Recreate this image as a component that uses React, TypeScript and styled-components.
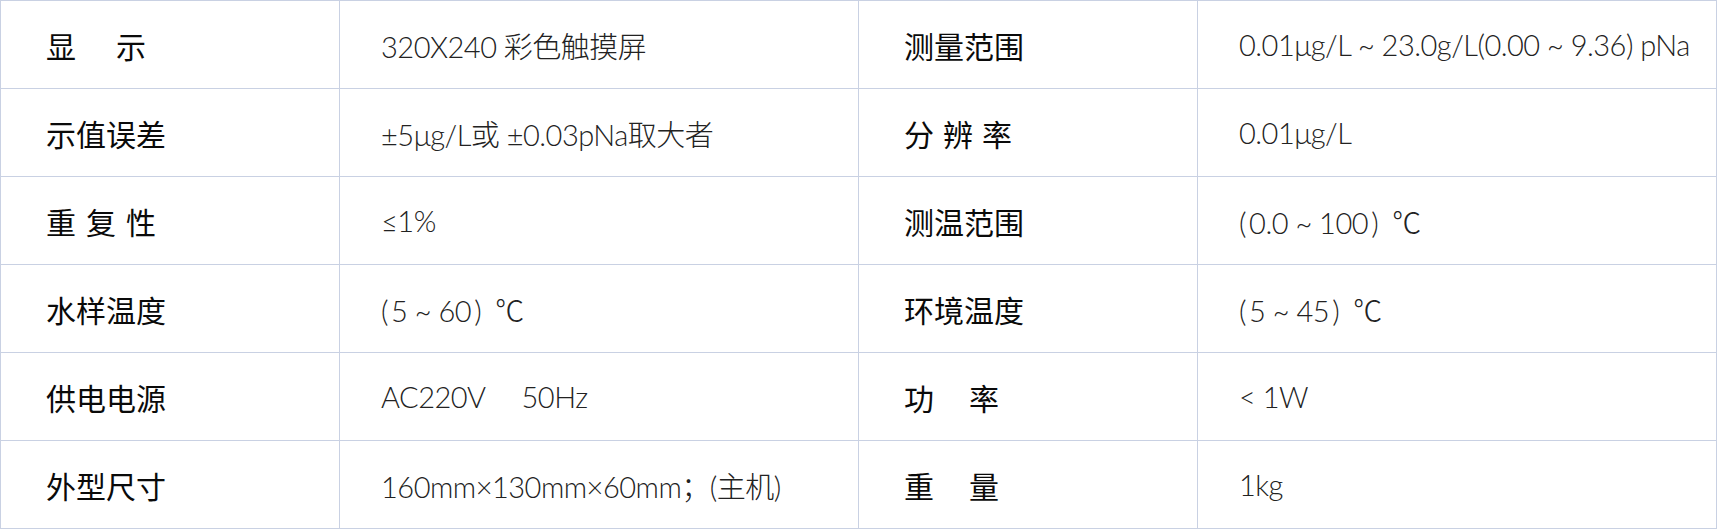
import styled, { createGlobalStyle } from "styled-components";

const GlobalStyle = createGlobalStyle`
  html, body {
    margin: 0;
    padding: 0;
    background: #fff;
  }
`;

type Spec = {
  label: string;
  spacing?: number;
  value: string;
};

const specs: Spec[] = [
  { label: "显示", spacing: 40, value: "320X240 彩色触摸屏" },
  { label: "测量范围", value: "0.01μg/L ~ 23.0g/L(0.00 ~ 9.36) pNa" },
  { label: "示值误差", value: "±5μg/L或 ±0.03pNa取大者" },
  { label: "分辨率", spacing: 9, value: "0.01μg/L" },
  { label: "重复性", spacing: 10, value: "≤1%" },
  { label: "测温范围", value: "(\u20090.0 ~ 100\u2009)\u2002℃" },
  { label: "水样温度", value: "(\u20095 ~ 60\u2009)\u2002℃" },
  { label: "环境温度", value: "(\u20095 ~ 45\u2009)\u2002℃" },
  { label: "供电电源", value: "AC220V     50Hz" },
  { label: "功率", spacing: 35, value: "< 1W" },
  { label: "外型尺寸", value: "160mm×130mm×60mm；(主机)" },
  { label: "重量", spacing: 35, value: "1kg" },
];

const App = () => {
  return (
    <>
      <GlobalStyle />
      <SpecGrid>
        {specs.map((spec) => [
          <LabelCell key={spec.label}>
            <Label $spacing={spec.spacing ?? 0}>{spec.label}</Label>
          </LabelCell>,
          <ValueCell key={spec.label + "-v"}>{spec.value}</ValueCell>,
        ])}
      </SpecGrid>
    </>
  );
};

const SpecGrid = styled.div`
  width: 1717px;
  box-sizing: border-box;
  display: grid;
  grid-template-columns: 339px 519px 339px 519px;
  grid-auto-rows: 88px;
  border-top: 1px solid #c9d1e3;
  border-left: 1px solid #c9d1e3;
`;

const Cell = styled.div`
  box-sizing: border-box;
  display: flex;
  align-items: center;
  border-right: 1px solid #c9d1e3;
  border-bottom: 1px solid #c9d1e3;
  white-space: pre;
  overflow: hidden;
`;

const LabelCell = styled(Cell)`
  padding-left: 45px;
`;

const Label = styled.span<{ $spacing: number }>`
  font-family: "Noto Sans CJK SC", "Noto Sans", sans-serif;
  font-size: 30px;
  font-weight: 400;
  color: #0a0a0a;
  letter-spacing: ${(p) => p.$spacing}px;
`;

const ValueCell = styled(Cell)`
  padding-left: 41px;
  font-family: "Lato", "Noto Sans CJK SC", sans-serif;
  font-size: 29px;
  font-weight: 300;
  letter-spacing: -0.5px;
  color: #222;
`;

export default App;
